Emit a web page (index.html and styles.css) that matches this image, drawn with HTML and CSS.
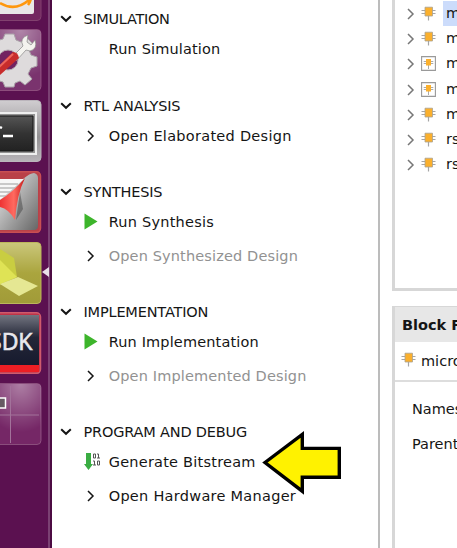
FILE: index.html
```
<!DOCTYPE html>
<html lang="en">
<head>
<meta charset="utf-8">
<title>Flow Navigator</title>
<link rel="stylesheet" href="styles.css">
</head>
<body>
<svg width="0" height="0" class="defs">
  <defs>
    <linearGradient id="silver" x2="0" y2="1"><stop stop-color="#d0cdd0"/><stop offset=".6" stop-color="#929092"/><stop offset="1" stop-color="#b7b4b8"/></linearGradient>
    <linearGradient id="paper" x2="1" y2="1"><stop stop-color="#eee"/><stop offset=".5" stop-color="#aaa"/><stop offset="1" stop-color="#666"/></linearGradient>
    <linearGradient id="red" x2="1" y2="0"><stop stop-color="#e33"/><stop offset=".55" stop-color="#ff6a60"/><stop offset="1" stop-color="#c81818"/></linearGradient>
    <linearGradient id="screen" x2="0" y2="1"><stop stop-color="#555"/><stop offset=".5" stop-color="#333"/><stop offset="1" stop-color="#222"/></linearGradient>
    <radialGradient id="shine" cx=".6" cy="0" r=".8"><stop stop-color="#fff" stop-opacity=".45"/><stop offset="1" stop-color="#fff" stop-opacity=".07"/></radialGradient>
    <linearGradient id="navy" x2="0" y2="1"><stop stop-color="#737580"/><stop offset=".45" stop-color="#242738"/><stop offset="1" stop-color="#161a2e"/></linearGradient>
    <linearGradient id="olive" x2="0" y2="1"><stop stop-color="#cbc77b"/><stop offset=".5" stop-color="#aaa53e"/><stop offset="1" stop-color="#a19b38"/></linearGradient>
    <symbol id="chip" viewBox="0 0 15 15"><path d="M.5 4.500h14M.5 7.500h14M7.500 10v4.500" stroke="#a5a5a5" stroke-width="1.200"/><path d="M4 1.200h7.500v8.800H4z" fill="#fbb02d" stroke="#a9a293" stroke-width=".8"/></symbol>
    <symbol id="boxchip" viewBox="0 0 15 15"><path d="M.6.6h13.8v13.8H.6z" fill="#fff" stroke="#999" stroke-width="1.1"/><path d="M2.700 5.500h9.600M2.700 7.500h9.600M7.500 9v4" stroke="#aaa"/><path d="M5 3h5v6.500H5z" fill="#fbb02d"/></symbol>
    <symbol id="right" viewBox="0 0 8 12"><path d="M1 1l5 5-5 5" fill="none" stroke="currentColor" stroke-width="1.5"/></symbol>
    <symbol id="down" viewBox="0 0 12 8"><path d="M1.2 1.2L6 5.8l4.8-4.6" fill="none" stroke="#151515" stroke-width="2"/></symbol>
    <symbol id="play" viewBox="0 0 14 17"><path d="M.5.5l13 8-13 8z" fill="#3db52b"/></symbol>
  </defs>
</svg>
<div class="app">
  <aside class="launcher">
    <svg class="tile" viewBox="0 0 42 62"><rect x="-10" y=".5" width="51" height="61" rx="4" fill="#732760" stroke="#82416f"/><path d="M-4 0h38v53q0 2-2 2H-4z" fill="#e9e6e7"/><path d="M0 44q15 9 29-3M22 39q7-3 9-1 0 4-3 8" fill="none" stroke="#ff970e" stroke-width="2.6"/></svg>
    <svg class="tile" viewBox="0 0 42 62"><rect x="-10" y=".5" width="51" height="61" rx="4" fill="#702463" stroke="#8d4d7c"/><rect x="-10" y="1" width="51" height="60" rx="4" fill="url(#shine)"/><path d="M5 5h9l2 6 5 2 6-4 6 6-4 6 2 5 6 2v9l-6 2-3 6 4 5-7 6-5-4-5 2-1 4H5l-2-5-7-2V12l7-2z" fill="#dedbdc" stroke="#aaa1a8"/><circle cx="8" cy="31" r="10" fill="#722361" stroke="#b3aab0"/><path d="M12 28l11-11q-4-8 5-11l-1 7 4 3 4-5q3 9-5 11l-4-1-10 11z" fill="#f4f3ef" stroke="#888" stroke-width=".7"/><path d="M-4 40l17-17q5 0 6 6L0 46l-4 2z" fill="#c82c2b"/><path d="M-2 39l15-14" stroke="#ed655c" stroke-width="2"/></svg>
    <svg class="tile" viewBox="0 0 42 62"><rect x="-10" y=".5" width="51" height="61" rx="4" fill="url(#silver)" stroke="#bbb5bc"/><path d="M-4 13h40v41H-4z" fill="#929292" stroke="#eee" stroke-width="2"/><path d="M-4 16h37v35H-4z" fill="url(#screen)" stroke="#151515"/><path d="M0 27l2 1M3 36h10" stroke="#fff" stroke-width="2.5"/></svg>
    <svg class="tile" viewBox="0 0 42 62"><rect x="-10" y=".8" width="50.5" height="60.5" rx="4" fill="#b94148" stroke="#c84f53" stroke-width="1.5"/><path d="M0 8h23q7-6 11-6 4 1 4 5v48q0 4-4 4H0z" fill="url(#paper)"/><path d="M0 8h24L0 29z" fill="#f7f7f7"/><path d="M0 13h18M0 17h15M0 21h10M0 25h6" stroke="#bbb" stroke-width="1.300"/><path d="M16 49l4-28 3 17z" fill="#444" opacity=".5"/><path d="M0 29Q13 21 25 7q-8 16-10 42Q9 38 0 36z" fill="url(#red)"/></svg>
    <svg class="tile" viewBox="0 0 42 62"><rect x="-10" y=".5" width="51" height="61" rx="4" fill="url(#olive)" stroke="#bcb65b"/><path d="M0 7l14 9 3 19-17 8z" fill="#c9cd41"/><path d="M0 18l17 17-17 7z" fill="#dfe355"/><path d="M0 42l18-7 20 9-19 10z" fill="#e5e793"/></svg>
    <svg class="tile" viewBox="0 0 42 62"><rect x="-10" y=".8" width="50.5" height="60.5" rx="4" fill="#bf3347" stroke="#ce5b6d" stroke-width="1.5"/><path d="M0 3h39v50H0z" fill="url(#navy)"/><path d="M0 53h39v7H0z" fill="#ec1e24"/><text x="-11" y="37.500" class="sdk" textLength="43.500" lengthAdjust="spacingAndGlyphs">SDK</text></svg>
    <svg class="tile" viewBox="0 0 42 62"><rect x="-10" y=".5" width="51" height="61" rx="4" fill="#6b175b" stroke="#8a4d7c"/><rect x="-10" y="1" width="51" height="60" rx="4" fill="url(#shine)"/><path d="M0 32h39M10.500 3v57" stroke="#a2729a"/><path d="M-3 15h8.500v10H-3z" fill="#665a63" stroke="#fff" stroke-width="1.5"/></svg>
    <svg class="marker" viewBox="0 0 7 10"><path d="M7 0v10L0 5z" fill="#eadfe8"/></svg>
  </aside>
  <main class="navigator">
    <section><h2><svg class="down"><use href="#down"/></svg><span class="simulation">SIMULATION</span></h2>
      <div class="item"><i></i><span class="snug">Run Simulation</span></div></section>
    <section><h2><svg class="down"><use href="#down"/></svg><span>RTL ANALYSIS</span></h2>
      <div class="item"><i><svg class="right"><use href="#right"/></svg></i><span class="wide">Open Elaborated Design</span></div></section>
    <section><h2><svg class="down"><use href="#down"/></svg><span>SYNTHESIS</span></h2>
      <div class="item"><i><svg class="play"><use href="#play"/></svg></i><span class="mid">Run Synthesis</span></div>
      <div class="item off"><i><svg class="right"><use href="#right"/></svg></i><span class="snug">Open Synthesized Design</span></div></section>
    <section><h2><svg class="down"><use href="#down"/></svg><span>IMPLEMENTATION</span></h2>
      <div class="item"><i><svg class="play"><use href="#play"/></svg></i><span class="snug">Run Implementation</span></div>
      <div class="item off"><i><svg class="right"><use href="#right"/></svg></i><span class="snug">Open Implemented Design</span></div></section>
    <section><h2><svg class="down"><use href="#down"/></svg><span>PROGRAM AND DEBUG</span></h2>
      <div class="item"><i><svg class="bits" viewBox="0 0 17 17"><path d="M2 0h5v11h2l-4.500 6L0 11h2z" fill="#3aad43"/><path d="M9.500 1h2v4h-2zM13 1h1.500v4M13 5h3M9 8h1.500v4M9 12h3M13.500 8h2v4h-2z" fill="none" stroke="#555" stroke-width="1"/></svg></i><span class="mid">Generate Bitstream</span></div>
      <div class="item"><i><svg class="right"><use href="#right"/></svg></i><span class="wide">Open Hardware Manager</span></div></section>
    <svg class="arrow" viewBox="0 0 80 64"><path d="M3 31.500L40.300 3.500v13.900h37v28.900h-37v13.900z" fill="#fff200" stroke="#000" stroke-width="3.4"/></svg>
  </main>
  <div class="side">
    <div class="panel tree">
      <div class="node"><svg class="right"><use href="#right"/></svg><svg class="chip"><use href="#chip"/></svg><span class="sel">m</span></div>
      <div class="node"><svg class="right"><use href="#right"/></svg><svg class="chip"><use href="#chip"/></svg><span>m</span></div>
      <div class="node"><svg class="right"><use href="#right"/></svg><svg class="chip"><use href="#boxchip"/></svg><span>m</span></div>
      <div class="node"><svg class="right"><use href="#right"/></svg><svg class="chip"><use href="#boxchip"/></svg><span>m</span></div>
      <div class="node"><svg class="right"><use href="#right"/></svg><svg class="chip"><use href="#chip"/></svg><span>m</span></div>
      <div class="node"><svg class="right"><use href="#right"/></svg><svg class="chip"><use href="#chip"/></svg><span>rs</span></div>
      <div class="node"><svg class="right"><use href="#right"/></svg><svg class="chip"><use href="#chip"/></svg><span>rs</span></div>
    </div>
    <div class="panel props">
      <h3>Block P</h3>
      <div class="name"><svg class="chip"><use href="#chip"/></svg><span>micro</span></div>
      <div class="field">Names</div>
      <div class="field">Parent</div>
    </div>
  </div>
</div>
</body>
</html>
```
FILE: styles.css
```
* { box-sizing: border-box; }
body { margin: 0; overflow: hidden; background: #fff; color: #151515; font: 14.500px "DejaVu Sans", sans-serif; }
svg { display: block; flex: none; }
.defs { position: absolute; }
.app { display: flex; width: 457px; height: 548px; overflow: hidden; }
.launcher { position: relative; flex: none; width: 52px; display: flex; flex-direction: column; gap: 8.800px; margin-top: -41.500px; height: 590px; background: linear-gradient(90deg, #5b1150 0 47.500px, #7b4173 48px 49.500px, #4c0b43 50px); }
.tile { width: 42px; height: 62px; overflow: hidden; }
.marker { position: absolute; left: 42px; top: 308.500px; width: 7px; height: 10px; }
.sdk { font: 24px "Open Sans", sans-serif; fill: #e8e8ed; stroke: #e8e8ed; stroke-width: .7px; }
.navigator { position: relative; flex: none; width: 328px; padding-top: 4px; border-right: 2px solid #bcbcbc; }
section { margin-bottom: 26.500px; }
h2 { display: flex; align-items: center; gap: 11.500px; height: 30px; margin: 0; padding-left: 8px; font-size: 14.500px; font-weight: 400; }
h2 span { letter-spacing: -.18px; }
h2 .simulation { letter-spacing: -.32px; }
.down { width: 12px; height: 8px; }
.item { display: flex; align-items: center; height: 30px; padding-left: 32px; }
.item + .item { margin-top: 3.500px; }
.item i { width: 24.700px; flex: none; }
.item span, h2 span { white-space: nowrap; }
.snug { letter-spacing: .14px; }
.mid { letter-spacing: .23px; }
.wide { letter-spacing: .28px; }
.right { width: 8px; height: 12px; }
.item .right { margin-left: 3px; margin-top: 1px; }
.play { width: 14px; height: 17px; margin-top: -1px; }
.bits { width: 17px; height: 17px; margin-top: -2px; }
.off span { color: #929292; }
.arrow { position: absolute; left: 210px; top: 431px; width: 80px; height: 64px; }
.side { flex: none; width: 77px; padding-left: 12px; overflow: hidden; }
.panel { width: 90px; border: solid #d7d7d7; border-width: 0 0 0 3px; }
.tree { height: 291px; border-bottom-width: 3px; padding-top: 1px; }
.node { display: flex; align-items: center; height: 25.200px; padding-left: 12px; color: #151515; }
.node .right { color: #777; margin-right: 6px; margin-top: 1px; }
.chip { width: 15px; height: 15px; }
.node span { margin-left: 7px; padding-left: 3px; height: 25px; line-height: 25px; width: 40px; }
.node .sel { background: #ccdcfb; }
.props { height: 260px; margin-top: 15px; border-top-width: 1px; }
h3 { margin: 0; height: 35px; padding-left: 7px; background: #e7e7e7; font-size: 14.500px; line-height: 36px; white-space: nowrap; }
.name { display: flex; align-items: center; gap: 5px; height: 40px; padding-left: 6px; border-bottom: 2px solid #ddd; margin-bottom: 10px; }
.name .chip { margin-top: -3px; }
.field { height: 35px; line-height: 35px; padding-left: 17px; }
```
